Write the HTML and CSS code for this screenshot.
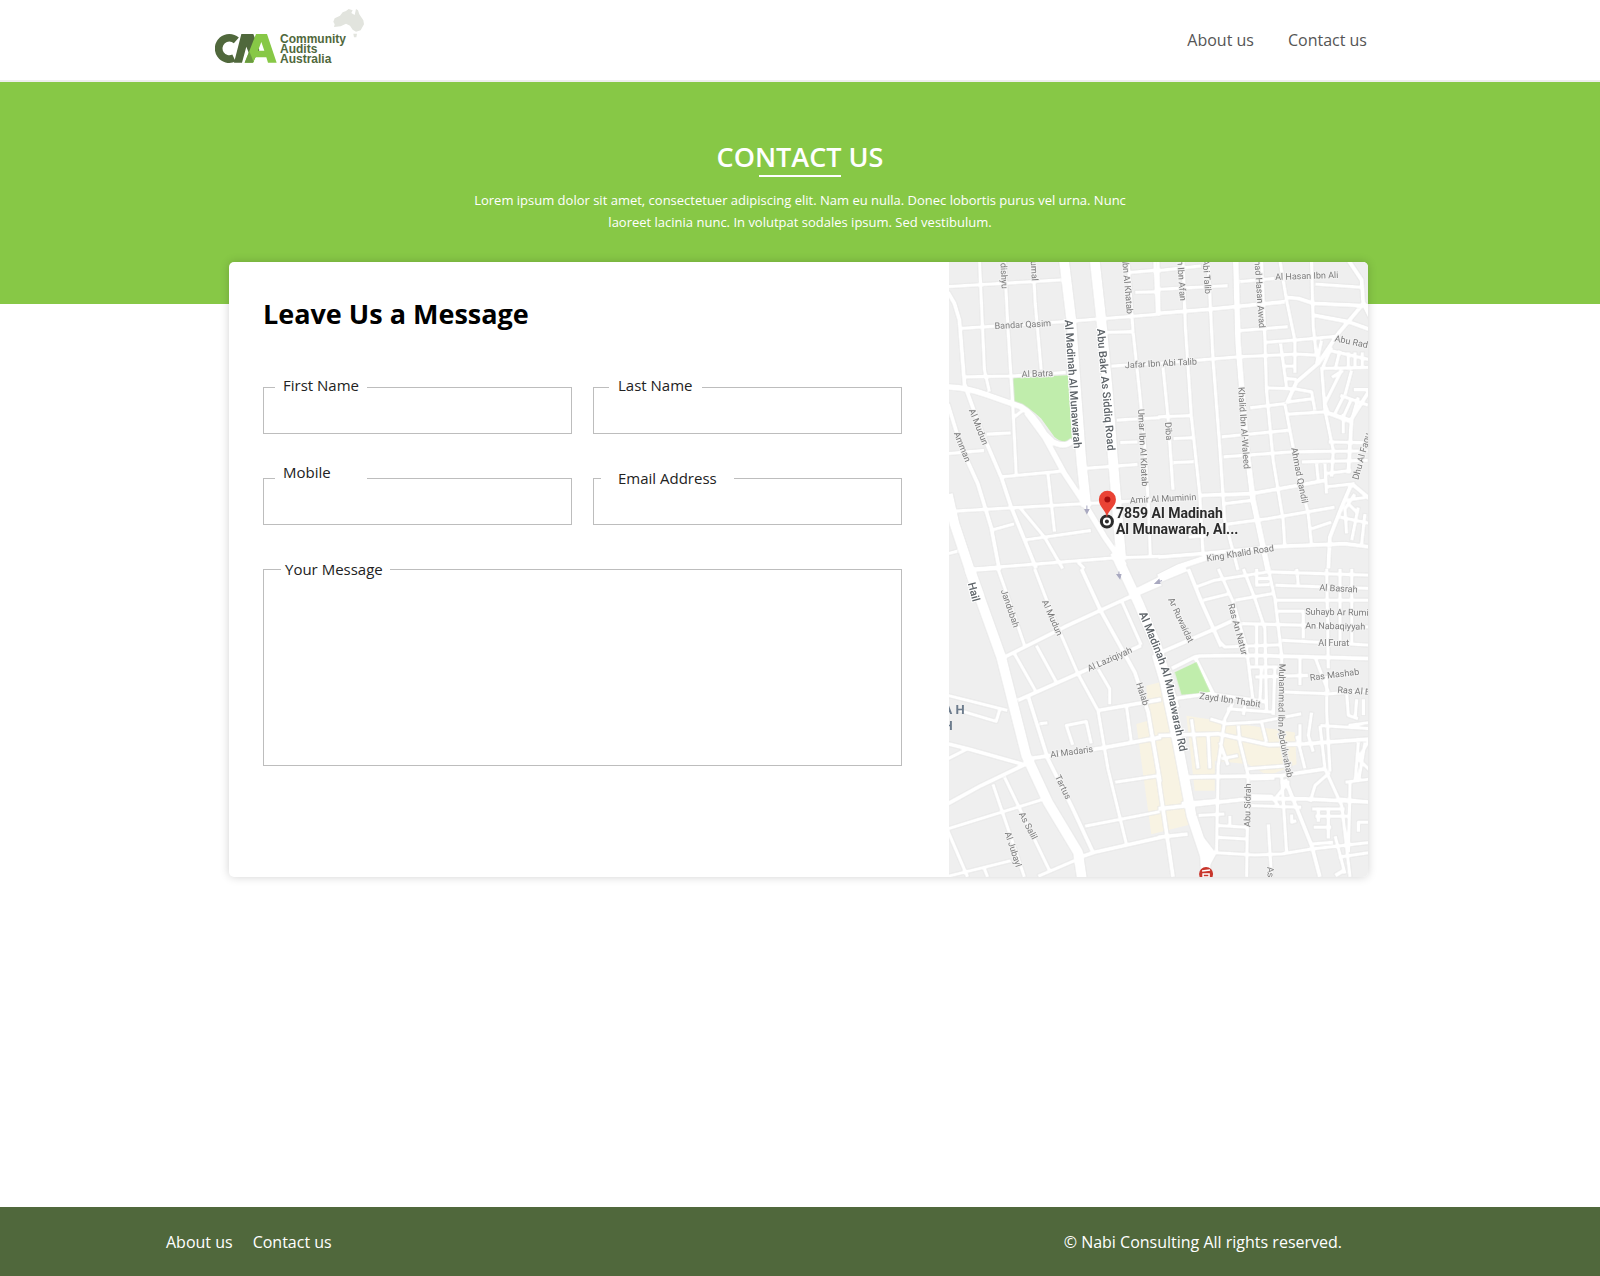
FILE: index.html
```html
<!DOCTYPE html>
<html lang="en">
<head>
<meta charset="utf-8">
<meta name="viewport" content="width=device-width, initial-scale=1">
<title>Contact us - Community Audits Australia</title>
<link rel="stylesheet" href="styles.css">
</head>
<body>
<header class="site-header">
  <div class="header-inner">
    <a class="logo" href="#" aria-label="Community Audits Australia">
      <svg width="150" height="64" viewBox="0 0 150 64">
        <g transform="translate(-3 22) scale(.333333)">
          <path d="M73 31A32 32 0 1 0 66 84" fill="none" stroke="#50683c" stroke-width="23"/>
          <path d="M66 98L88 12H124L142 60L122 98L103 50L90 98Z" fill="#50683c"/>
          <path d="M98 98L132 12H165L194 98H168L163 82H130L124 98Z M138 62H157L148 36Z" fill="#87c846" fill-rule="evenodd"/>
          <path d="M98 98L112 64L124 94L122 98Z" fill="#6a9a40"/>
        </g>
        <path transform="translate(105 -3) scale(.333333)" d="M40 50L44 40L60 32L68 22L78 18L86 12L98 16L94 24L104 30L108 12L114 16L118 28L130 46L132 58L122 76L108 80L98 74L90 62L78 56L62 64L42 66L44 58ZM100 86H111L109 97L102 97Z" fill="#e2e4de"/>
        <text class="logo-text" x="65" y="35">Community</text>
        <text class="logo-text" x="65" y="45">Audits</text>
        <text class="logo-text" x="65" y="55">Australia</text>
      </svg>
    </a>
    <nav class="main-nav">
      <a href="#">About us</a>
      <a href="#">Contact us</a>
    </nav>
  </div>
</header>

<main>
  <section class="banner">
    <h1>CONTACT US</h1>
    <p>Lorem ipsum dolor sit amet, consectetuer adipiscing elit. Nam eu nulla. Donec lobortis purus vel urna. Nunc laoreet lacinia nunc. In volutpat sodales ipsum. Sed vestibulum.</p>
  </section>

  <div class="card-wrap">
  <section class="card">
    <form class="message-form">
      <h2>Leave Us a Message</h2>
      <div class="fields">
        <div class="field">
          <label for="first">First Name</label>
          <input id="first" type="text">
        </div>
        <div class="field field-inset">
          <label for="last">Last Name</label>
          <input id="last" type="text">
        </div>
        <div class="field field-raised">
          <label for="mobile">Mobile</label>
          <input id="mobile" type="tel">
        </div>
        <div class="field field-roomy">
          <label for="email">Email Address</label>
          <input id="email" type="email">
        </div>
        <div class="field field-message">
          <label for="message">Your Message</label>
          <textarea id="message"></textarea>
        </div>
      </div>
    </form>

    <div class="map">
      <svg viewBox="0 0 419 614" preserveAspectRatio="xMidYMid slice" role="img" aria-label="Street map">
        <defs>
          <path id="munawarah-rd" d="M190 351L207 392Q214 410 218 428L233 500"/>
          <path id="abdulwahab" d="M330 401L329 470L340 525"/>
        </defs>
        <rect width="419" height="614" fill="#efefef"/>
        <g transform="scale(.333333) translate(-3 -6)">
          <!-- parks and commercial blocks -->
          <path class="park" d="M195 352L360 345L372 535Q350 555 320 530L280 475Q240 435 198 425Z"/>
          <path class="shop" d="M595 1275L636 1265L680 1400L730 1690L610 1720L565 1390L600 1380ZM715 1365L1040 1415L1045 1510L960 1545L900 1510L800 1500L800 1590L740 1590Z"/>
          <g class="roads">
            <!-- north west -->
            <g>
              <path d="M0 80L340 60M50 350L190 348L355 337M475 217L550 215M490 318L636 308M505 480L636 472M515 547L570 545M400 625L570 612M115 522L190 518M0 580L110 570M160 650L350 632M20 752L410 730L636 718M135 808L200 790M235 838L430 810M0 880L30 872M540 38L636 30M560 97L636 95"/>
              <path d="M40 205L350 185L475 175L636 162M80 925L500 892L636 888M95 0L110 330L125 395M170 0L180 200L195 440L205 640M255 0L262 130L280 330M300 640L320 815M215 740L290 830L345 925M200 470L225 450M390 905L410 925M540 0L555 215L575 400L590 560L600 720L607 890M620 0L628 160"/>
              <path class="wide" d="M0 95L20 130L35 180L50 370L60 400L100 510L160 650L190 740L265 924M0 430L40 560L90 670L130 800L155 930"/>
              <path class="wider" d="M0 380Q60 382 120 405L220 440Q255 460 290 520L315 545Q350 565 375 540M235 455L290 530L350 640L410 730L470 830L530 915"/>
              <path class="main" d="M348 0L370 180L385 400L400 600L415 740M440 0L460 180L480 400L495 600L520 900M0 700L20 790L65 925L95 1010"/>
            </g>
            <!-- north east -->
            <g transform="translate(630 0)">
              <path d="M0 88L210 77M0 32L130 18M245 65L350 55M470 72L615 82M0 310L240 290L415 282L475 285M245 212L390 200M320 247L410 240L540 228M375 318H410M378 355L415 358M325 383L410 386L460 395L470 450M275 443L380 430M390 425L465 415M390 462L500 455M500 430L510 458L580 480M0 470L95 466M45 535L105 532M45 607L108 604M190 530L395 510M195 590L400 575L630 572M430 605L630 600M510 545L630 548M200 730L280 720M180 795L330 775L530 740M460 805L520 785M500 680L590 670M490 325L640 322M585 388H640M520 352L555 330M545 405L630 435M570 730L600 760M545 770L640 790M500 640L580 630M490 240L475 310M90 830L150 825"/>
              <path d="M0 0L3 160M75 0L82 200L100 470L125 700L135 880M150 0L165 300L185 560L200 780L240 930M310 0L320 230L325 390L345 600L375 780L380 860M365 0L385 120L410 240V340M460 0L465 200L475 290M367 250L385 380M490 320L500 450L525 570L520 650M380 430L395 510L420 640L450 760L460 855M550 330L500 430M555 410L530 460M580 415L555 470M580 330L560 405M600 410L580 480M520 260L490 330M545 270L530 330M570 275V330M590 275V325M612 275V320M510 270L640 300M475 610L480 660M500 610L505 700M555 460V520M590 700L560 745L565 820M600 740L580 840M620 760L610 850M560 720L630 710M15 320L30 470L45 690"/>
              <path class="wide" d="M0 160L150 148L380 125M380 112L420 115L465 130L640 138M465 165L570 185L640 210M570 0L610 60L615 130L640 180M620 125L540 220L480 310L415 365L385 430M640 380L580 475L570 640M500 455L580 485M125 705L280 700L420 675L500 660M0 890L150 878L360 858L560 850L640 860M580 670L550 740L515 830L510 925M580 670L640 720"/>
              <path class="wider" d="M233 0L240 250L265 560L285 720L330 930M0 950L60 920L150 890"/>
            </g>
            <!-- south west -->
            <g transform="translate(0 924)">
              <path d="M80 5L155 0M150 0L175 70L230 230M260 0L310 130L390 315L450 425L480 600L535 825M265 230L325 340M200 255L265 370M0 380L180 425M35 425L145 458L155 425M275 465L300 462M375 530L355 470L415 458L430 525M450 300L485 360V408M535 410L550 520M500 640L636 620M410 772L636 728M0 780L290 690M135 645L230 925M170 625L305 905M0 785L60 925M0 922L190 875M110 900L120 925M270 922L380 875M0 570L60 540M520 95L580 230"/>
              <path class="wide" d="M165 268L350 175L530 92L640 45M210 395L390 315L580 230M400 0L460 130L560 310L600 430L636 640M450 425L640 392M240 380L300 570L370 710L435 850M0 525L60 540L230 588M240 570L460 538L640 505M0 705L100 650L235 585M380 870L440 850L640 805"/>
              <path class="main" d="M65 0L160 265L235 560L300 700L390 850L402 930M500 -50L570 100L625 230L680 420"/>
            </g>
            <!-- south east -->
            <g transform="translate(630 924)">
              <path d="M115 55L170 35L330 10L640 20M135 95L215 75M230 95L345 75M350 95H640M360 128H435V210M250 165L640 175M180 215L200 235L370 228M370 265V350M290 50L335 48M290 30H335M295 0V50M415 0L420 50M350 50L640 60M370 215L640 230M275 295H360M290 325L450 320M375 370L515 375L640 365M205 420L340 430M155 450L205 465L300 460L430 435M310 460L325 520M460 430L450 500L465 550M425 465V520M485 470L640 480M100 450L120 600M150 500L155 600M190 570L240 560M270 600L400 590M275 630L350 628M270 680L340 682L360 710M270 710L430 715M120 740L200 735M180 770L265 775M175 805L265 810M215 740V770M330 765L340 930M400 735V760L415 755M460 720H560M470 742H570M460 825L525 820M540 865L640 850M600 790V760H640M455 700L470 650L515 610M390 640L350 690M365 640H395M560 640L640 630M545 690L640 700M600 520L590 640M620 520L600 640M640 500L600 570L640 610M565 375L570 440L600 450M595 390L590 450M615 390V440M570 470L640 460M505 320V430L515 610"/>
              <path d="M180 0L225 100L265 240L285 400M255 0L290 90L320 180L325 430M330 0L350 90L370 260M295 170V290M310 290L305 400M350 290L345 440M505 0L510 300M545 0V220M580 0V230M425 265V350M470 265L510 370M415 500L440 600M485 470L500 600L550 710L575 925M225 400L200 450L180 590L175 850M240 470L245 520L270 620L265 925M370 620L385 850M480 715V760M510 715V810M530 800L560 915M575 640L570 850M465 775H520M185 520L210 590M260 410L255 440M150 850L290 858L370 855L460 840L640 820"/>
              <path class="wide" d="M90 0L130 100L190 235M0 255L160 185L225 155M40 300L110 265L125 262L280 260L640 270M110 265L165 375M0 500L180 495L330 528L440 525L640 510M45 390L150 375L330 400M0 720L270 690L440 690L640 700M90 625L370 620L500 600M380 630L460 830L485 925M0 805L90 795M0 620L45 925M530 920L555 905M70 705L180 695"/>
              <path class="main" d="M-5 255L20 340L60 530L100 740L140 860L145 930"/>
              <path class="wider" d="M-80 75L0 35L85 0M130 810L165 855L140 900"/>
            </g>
          </g>
          <path class="park" d="M680 1235L745 1204L786 1294L700 1302Z"/>
        </g>

        <g class="street">
          <text transform="translate(46 67) rotate(-3)">Bandar Qasim</text>
          <text transform="translate(73 115) rotate(-2)">Al Batra</text>
          <text transform="translate(53 27) rotate(87)" text-anchor="end">dishyu</text>
          <text transform="translate(83 19) rotate(87)" text-anchor="end">umal</text>
          <text transform="translate(178 52) rotate(85)" text-anchor="end">Ibn Al Khatab</text>
          <text transform="translate(231 39) rotate(86)" text-anchor="end">n Ibn Afan</text>
          <text transform="translate(256 32) rotate(86)" text-anchor="end">Abi Talib</text>
          <text transform="translate(310 66) rotate(86)" text-anchor="end">mad Hasan Awad</text>
          <text transform="translate(326 18) rotate(-2)">Al Hasan Ibn Ali</text>
          <text transform="translate(385 79) rotate(12)">Abu Rad</text>
          <text transform="translate(176 106) rotate(-3)">Jafar Ibn Abi Talib</text>
          <text transform="translate(20 148) rotate(68)">Al Mudun</text>
          <text transform="translate(5 171) rotate(68)">Amman</text>
          <text transform="translate(189 147) rotate(87)">Umar Ibn Al Khatab</text>
          <text transform="translate(216 160) rotate(86)">Diba</text>
          <text transform="translate(289 125) rotate(86)">Khalid Ibn Al-Waleed</text>
          <text transform="translate(342 186) rotate(79)">Ahmad Qandil</text>
          <text transform="translate(409 218) rotate(-75)">Dhu Al Faqu</text>
          <text transform="translate(181 241) rotate(-3)">Amir Al Muminin</text>
          <text transform="translate(258 299) rotate(-9)">King Khalid Road</text>
          <text transform="translate(52 328) rotate(71)">Jandubah</text>
          <text transform="translate(93 339) rotate(66)">Al Mudun</text>
          <text transform="translate(140 409) rotate(-24)">Al Laziqiyah</text>
          <text transform="translate(187 421) rotate(72)">Halab</text>
          <text transform="translate(102 495) rotate(-8)">Al Madaris</text>
          <text transform="translate(106 514) rotate(64)">Tartus</text>
          <text transform="translate(70 551) rotate(63)">As Salil</text>
          <text transform="translate(56 570) rotate(72)">Al Jubayl</text>
          <text transform="translate(219 337) rotate(65)">Ar Ruwaidat</text>
          <text transform="translate(279 342) rotate(75)">Ras An Natur</text>
          <text transform="translate(370 328) rotate(3)">Al Basrah</text>
          <text transform="translate(356 352) rotate(1)">Suhayb Ar Rumi</text>
          <text transform="translate(356 366) rotate(1)">An Nabaqiyyah</text>
          <text transform="translate(369 383)">Al Furat</text>
          <text transform="translate(361 418) rotate(-7)">Ras Mashab</text>
          <text transform="translate(388 430) rotate(4)">Ras Al E</text>
          <text transform="translate(250 436) rotate(8)">Zayd Ibn Thabit</text>
          <text><textPath href="#abdulwahab">Muhammad Ibn Abdulwahab</textPath></text>
          <text transform="translate(301 564) rotate(-89)">Abu Sidrah</text>
          <text transform="translate(318 604) rotate(87)">As</text>
        </g>
        <g class="street avenue">
          <text transform="translate(116 58) rotate(86)">Al Madinah Al Munawarah</text>
          <text transform="translate(148 67) rotate(85)">Abu Bakr As Siddiq Road</text>
          <text transform="translate(19 321) rotate(75)">Hail</text>
          <text><textPath href="#munawarah-rd">Al Madinah Al Munawarah Rd</textPath></text>
        </g>
        <text class="district" x="16" y="451" text-anchor="end">A H</text>
        <text class="district" x="4" y="467" text-anchor="end">H</text>

        <!-- one-way arrows -->
        <path class="arrow" d="M138 243V249M136 247L138 251L140 247ZM170 309V314M168 312L171 316L172 312ZM213 318L208 320M210 317L206 321L211 321Z"/>

        <!-- pin -->
        <circle cx="158" cy="259" r="5.500" fill="#fff" stroke="#2b2b2b" stroke-width="3"/>
        <circle cx="158" cy="259" r="2" fill="#2b2b2b"/>
        <path d="M158 255C157 247 150 245 150 237A8.500 8.500 0 0 1 167 237C167 245 159 247 158 255Z" fill="#ea4335"/>
        <circle cx="158.500" cy="237" r="3" fill="#a50e0e"/>
        <text class="place" x="167" y="256">7859 Al Madinah</text>
        <text class="place" x="167" y="272">Al Munawarah, Al...</text>

        <circle cx="257" cy="611" r="7" fill="#c8362c"/>
        <path d="M253 608L261 607M254 611H260V614H254Z" fill="#c8362c" stroke="#fff" stroke-width="1.500"/>
      </svg>
    </div>
  </section>
  </div>
</main>

<footer class="site-footer">
  <div class="footer-inner">
    <nav class="footer-nav">
      <a href="#">About us</a>
      <a href="#">Contact us</a>
    </nav>
    <p>© Nabi Consulting All rights reserved.</p>
  </div>
</footer>
</body>
</html>
```
FILE: styles.css
```css
* {
  box-sizing: border-box;
}

body {
  margin: 0;
  min-height: 100vh;
  display: flex;
  flex-direction: column;
  background: #fff;
  color: #222;
  font: 16px/24px "Open Sans", "Noto Sans", sans-serif;
}

a {
  color: inherit;
  text-decoration: none;
}

h1, h2, p {
  margin: 0;
}

main {
  flex: 1;
}

.site-header {
  border-bottom: 2px solid #eee;
}

.header-inner {
  display: flex;
  align-items: center;
  justify-content: space-between;
  max-width: 1170px;
  min-height: 80px;
  margin: 0 auto;
  padding-right: 18px;
}

.logo svg {
  display: block;
}

.logo-text {
  font: bold 12px "Liberation Sans", sans-serif;
  fill: #50683c;
}

.main-nav {
  display: flex;
  gap: 34px;
  color: #555;
}

.banner {
  display: flex;
  flex-direction: column;
  align-items: center;
  padding: 57px 24px 71px;
  background: #87c846;
  color: #fff;
  text-align: center;
}

.banner h1 {
  font-size: 27px;
  font-weight: 600;
  line-height: 36px;
}

.banner h1::after {
  content: "";
  display: block;
  width: 82px;
  height: 2px;
  margin: 0 auto;
  background: #fff;
}

.banner p {
  max-width: 670px;
  margin-top: 12px;
  font-size: 13px;
  line-height: 22px;
}

.card-wrap {
  max-width: 1142px;
  margin: -42px auto 0;
  padding-right: 3px;
}

.card {
  display: grid;
  grid-template-columns: 720fr 419fr;
  border-radius: 5px;
  overflow: hidden;
  background: #fff;
  box-shadow: 0 0 10px rgba(0, 0, 0, 0.18);
}

.message-form {
  padding: 34px 47px 111px 34px;
}

.message-form h2 {
  color: #000;
  font-size: 27px;
  font-weight: 700;
  line-height: 36px;
}

.fields {
  display: grid;
  grid-template-columns: 1fr 1fr;
  gap: 44px 21px;
  margin-top: 55px;
}

.field {
  position: relative;
}

.field label {
  position: absolute;
  top: -12px;
  left: 12px;
  min-width: 92px;
  padding: 0 8px;
  background: #fff;
  font-size: 15px;
  line-height: 20px;
}

.field-inset label {
  left: 16px;
  padding: 0 9px;
}

.field-raised label {
  top: -16px;
}

.field-roomy label {
  top: -10px;
  left: 8px;
  padding: 0 17px;
}

.field-message {
  grid-column: 1 / -1;
}

.field-message label {
  top: -10px;
  left: 18px;
  padding: 0 7px 0 4px;
}

.field input,
.field textarea {
  display: block;
  width: 100%;
  height: 47px;
  padding: 8px 16px;
  border: 1px solid #bdbdbd;
  border-radius: 0;
  background: none;
  font: inherit;
  resize: none;
}

.field textarea {
  height: 197px;
}

.map svg {
  display: block;
  width: 100%;
  height: 100%;
}

.park {
  fill: #c0edac;
}

.shop {
  fill: #f8f3e3;
}

.roads {
  fill: none;
  stroke: #fff;
  stroke-width: 12;
  stroke-linejoin: round;
  filter: drop-shadow(0 0 1px #c4c4c4);
}

.roads .wide {
  stroke-width: 14;
}

.roads .wider {
  stroke-width: 19;
}

.roads .main {
  stroke-width: 32;
}

.street {
  fill: #7c7c7c;
  stroke: #f3f3f3;
  stroke-width: 2px;
  paint-order: stroke;
  font: 9px Roboto, sans-serif;
}

.avenue {
  fill: #5d6368;
  stroke: #fff;
  font-size: 11px;
  font-weight: 500;
}

.district {
  fill: #6d7c8d;
  font: 700 13px Roboto, sans-serif;
}

.place {
  fill: #2b2b2b;
  stroke: #f5f5f5;
  stroke-width: 2px;
  paint-order: stroke;
  font: 700 14px Roboto, sans-serif;
}

.arrow {
  fill: #a9a9c0;
  stroke: #a9a9c0;
}

.site-footer {
  background: #50683c;
  color: #fff;
}

.footer-inner {
  display: flex;
  align-items: center;
  justify-content: space-between;
  max-width: 1268px;
  min-height: 69px;
  margin: 0 auto;
  padding-right: 92px;
}

.footer-nav {
  display: flex;
  gap: 20px;
}
```
